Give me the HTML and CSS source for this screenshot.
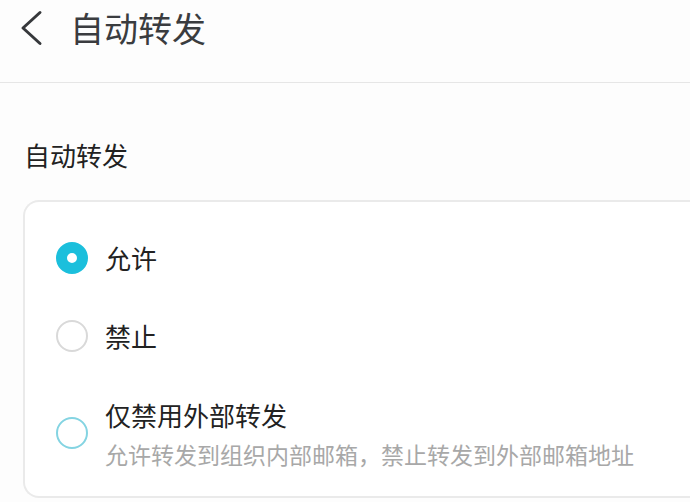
FILE: index.html
```html
<!DOCTYPE html>
<html lang="zh">
<head>
<meta charset="utf-8">
<link rel="stylesheet" href="styles.css">
</head>
<body>
<header class="topbar">
  <svg class="back" width="24" height="36" viewBox="0 0 24 36"><path d="M21 2.5 L4 18 L21 33.5" fill="none" stroke="#36383b" stroke-width="3" stroke-linecap="round" stroke-linejoin="round"/></svg>
  <h1 class="title">自动转发</h1>
</header>
<main class="content">
  <div class="section-label">自动转发</div>
  <div class="card">
    <div class="row">
      <span class="radio radio-on"></span>
      <span class="label">允许</span>
    </div>
    <div class="row">
      <span class="radio"></span>
      <span class="label">禁止</span>
    </div>
    <div class="row row-tall">
      <span class="radio radio-hint"></span>
      <div class="texts">
        <div class="label">仅禁用外部转发</div>
        <div class="sub">允许转发到组织内部邮箱，禁止转发到外部邮箱地址</div>
      </div>
    </div>
  </div>
</main>
</body>
</html>
```
FILE: styles.css
```css
html, body {
  margin: 0;
  padding: 0;
  background: #fdfdfd;
  overflow: hidden;
  font-family: "Noto Sans CJK SC", "Noto Sans", sans-serif;
}
.topbar {
  box-sizing: border-box;
  height: 83px;
  border-bottom: 1px solid #e6e6e6;
  display: flex;
  align-items: flex-start;
  padding: 10px 0 0 19px;
}
.back {
  display: block;
}
.title {
  margin: 0 0 0 27px;
  font-size: 34px;
  line-height: 36px;
  font-weight: 400;
  color: #3a3c3f;
}
.content {
  padding: 57px 0 0 23px;
}
.section-label {
  font-size: 26px;
  line-height: 30px;
  color: #222;
  margin-left: 1px;
}
.card {
  margin-top: 30px;
  box-sizing: border-box;
  border: 2px solid #eaeaea;
  border-right: none;
  border-radius: 16px 0 0 16px;
  background: #fff;
  padding: 17px 0 27px 31px;
}
.row {
  height: 78px;
  display: flex;
  align-items: center;
}
.row-tall {
  height: auto;
  padding-top: 22px;
}
.radio {
  box-sizing: border-box;
  width: 32px;
  height: 32px;
  border-radius: 50%;
  border: 2px solid #d9d9d9;
  flex: none;
  margin-right: 17px;
}
.radio-on {
  border: 11px solid #1bbfdc;
  background: #fff;
}
.radio-hint {
  border-color: #84d4e2;
}
.label {
  font-size: 26px;
  line-height: 36px;
  color: #222;
}
.sub {
  margin-top: 6px;
  font-size: 23px;
  line-height: 30px;
  color: #a8a8a8;
}
```
